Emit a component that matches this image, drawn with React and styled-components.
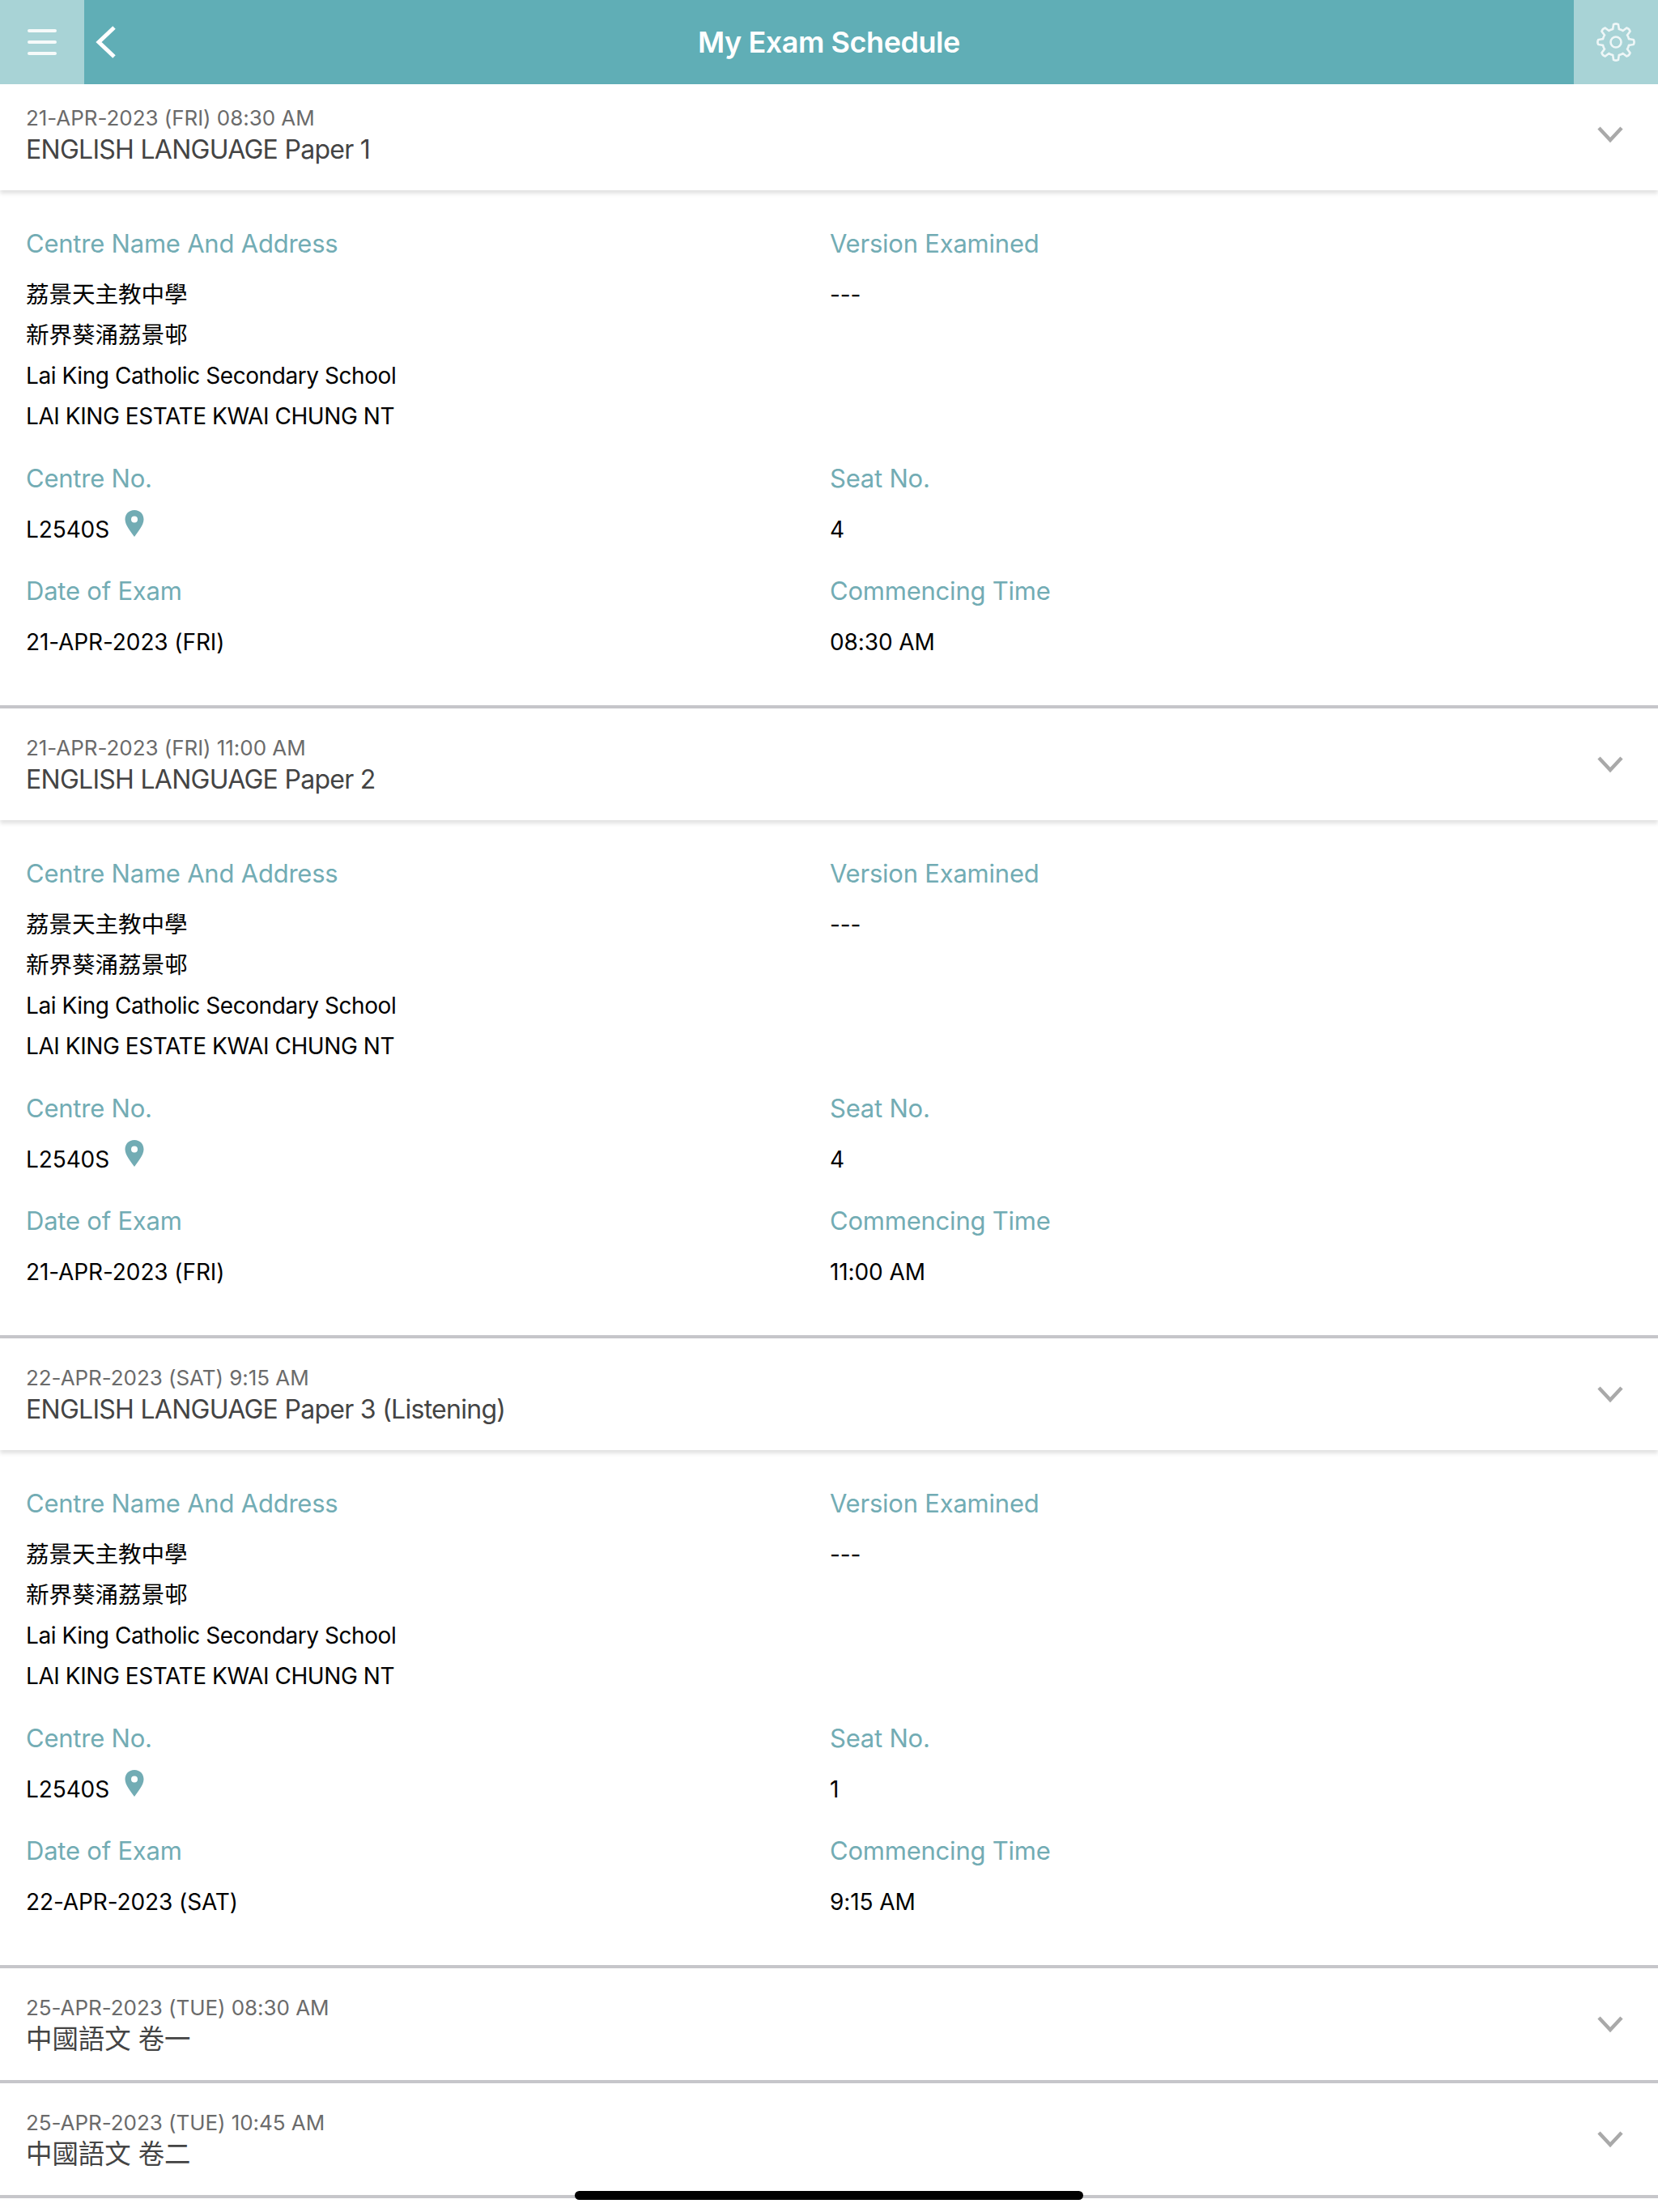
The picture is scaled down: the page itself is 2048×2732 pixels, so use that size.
import styled, { createGlobalStyle } from 'styled-components';

const exams = [
  {
    when: '21-APR-2023 (FRI) 08:30 AM',
    title: 'ENGLISH LANGUAGE Paper 1',
    seat: '4',
    date: '21-APR-2023 (FRI)',
    time: '08:30 AM',
  },
  {
    when: '21-APR-2023 (FRI) 11:00 AM',
    title: 'ENGLISH LANGUAGE Paper 2',
    seat: '4',
    date: '21-APR-2023 (FRI)',
    time: '11:00 AM',
  },
  {
    when: '22-APR-2023 (SAT) 9:15 AM',
    title: 'ENGLISH LANGUAGE Paper 3 (Listening)',
    seat: '1',
    date: '22-APR-2023 (SAT)',
    time: '9:15 AM',
  },
  { when: '25-APR-2023 (TUE) 08:30 AM', title: '中國語文 卷一', cjk: true },
  { when: '25-APR-2023 (TUE) 10:45 AM', title: '中國語文 卷二', cjk: true },
];

const address = [
  { text: '荔景天主教中學', cjk: true },
  { text: '新界葵涌荔景邨', cjk: true },
  { text: 'Lai King Catholic Secondary School' },
  { text: 'LAI KING ESTATE KWAI CHUNG NT' },
];

// outline of the 8 tooth cog in the settings button
const gearPath = () => {
  const teeth = 8;
  const point = (r, a) => `${(25 + r * Math.cos(a)).toFixed(2)} ${(25 + r * Math.sin(a)).toFixed(2)}`;
  let d = '';
  for (let i = 0; i < teeth; i++) {
    const step = (Math.PI * 2) / teeth;
    const a = i * step - Math.PI / 2;
    d += `${i === 0 ? 'M' : 'L'}${point(16.5, a - step * 0.3)} `;
    d += `L${point(22, a - step * 0.17)} `;
    d += `A6 6 0 0 1 ${point(22, a + step * 0.17)} `;
    d += `L${point(16.5, a + step * 0.3)} `;
    d += `A16.5 16.5 0 0 1 ${point(16.5, a + step * 0.7)} `;
  }
  return `${d}Z`;
};

const Chevron = () => (
  <ChevronIcon width="34" height="22" viewBox="0 0 34 22">
    <path d="M3 3 L17 18 L31 3" fill="none" stroke="#a9a9a9" strokeWidth="4.5" />
  </ChevronIcon>
);

const Pin = () => (
  <PinIcon width="24" height="33" viewBox="0 0 24 33">
    <path
      fillRule="evenodd"
      fill="#72acb4"
      d="M12 0 C5 0 0.5 5 0.5 11.5 C0.5 19 8 27 12 33 C16 27 23.5 19 23.5 11.5 C23.5 5 19 0 12 0 Z M12 7.5 A4 4 0 1 0 12 15.5 A4 4 0 1 0 12 7.5 Z"
    />
  </PinIcon>
);

const Details = ({ exam }) => (
  <DetailGrid>
    <Field>
      <Label>Centre Name And Address</Label>
      <AddressLines>
        {address.map((line) => (
          <Value key={line.text} $cjk={line.cjk} $tight={!line.cjk}>
            {line.text}
          </Value>
        ))}
      </AddressLines>
    </Field>
    <Field>
      <Label>Version Examined</Label>
      <AddressLines>
        <Value>---</Value>
      </AddressLines>
    </Field>
    <Field>
      <Label>Centre No.</Label>
      <ValueRow>
        <Value>L2540S</Value>
        <Pin />
      </ValueRow>
    </Field>
    <Field>
      <Label>Seat No.</Label>
      <ValueRow>
        <Value>{exam.seat}</Value>
      </ValueRow>
    </Field>
    <Field>
      <Label>Date of Exam</Label>
      <ValueRow>
        <Value>{exam.date}</Value>
      </ValueRow>
    </Field>
    <Field>
      <Label>Commencing Time</Label>
      <ValueRow>
        <Value>{exam.time}</Value>
      </ValueRow>
    </Field>
  </DetailGrid>
);

const App = () => {
  return (
    <>
      <GlobalStyle />
      <Page>
        <TopBar>
          <SideButton>
            <MenuIcon width="36" height="34" viewBox="0 0 36 34">
              <path d="M2 3 H34 M2 17 H34 M2 31 H34" stroke="#fff" strokeWidth="4" strokeLinecap="round" opacity="0.9" />
            </MenuIcon>
          </SideButton>
          <BackIcon width="26" height="40" viewBox="0 0 26 40">
            <path d="M23 2 L4 20 L23 38" fill="none" stroke="#fff" strokeWidth="5" />
          </BackIcon>
          <Title>My Exam Schedule</Title>
          <SideButton>
            <GearIcon width="50" height="50" viewBox="0 0 50 50">
              <path d={gearPath()} fill="none" stroke="#fff" strokeWidth="2.6" opacity="0.8" />
              <circle cx="25" cy="25" r="6.5" fill="none" stroke="#fff" strokeWidth="2.6" opacity="0.8" />
            </GearIcon>
          </SideButton>
        </TopBar>
        {exams.map((exam, i) => (
          <Exam key={exam.title}>
            <ExamHeader $first={i === 0} $open={!!exam.date}>
              <div>
                <When>{exam.when}</When>
                <ExamTitle $cjk={exam.cjk}>{exam.title}</ExamTitle>
              </div>
              <Chevron />
            </ExamHeader>
            {exam.date && <Details exam={exam} />}
          </Exam>
        ))}
        <HomeIndicator />
      </Page>
    </>
  );
};

export default App;

const GlobalStyle = createGlobalStyle`
  body {
    margin: 0;
    background: #fff;
    font-family: Inter, "Noto Sans CJK TC", sans-serif;
  }
`;

const Page = styled.div`
  position: relative;
  height: 2732px;
  overflow: hidden;
  background: #fff;
`;

const TopBar = styled.header`
  display: flex;
  align-items: center;
  height: 104px;
  background: #60aeb6;
`;

const SideButton = styled.div`
  display: flex;
  align-items: center;
  justify-content: center;
  width: 104px;
  height: 104px;
  flex: none;
  background: #a8d3d6;
`;

const MenuIcon = styled.svg``;

const GearIcon = styled.svg``;

const BackIcon = styled.svg`
  margin-left: 14px;
  flex: none;
`;

const Title = styled.h1`
  flex: 1;
  margin: 0 0 0 -40px;
  text-align: center;
  color: #fff;
  font-size: 36px;
  font-weight: 600;
  letter-spacing: -0.45px;
`;

const Exam = styled.section`
  border-bottom: 4px solid #c6c6ca;
`;

const ExamHeader = styled.div`
  display: flex;
  align-items: center;
  justify-content: space-between;
  box-sizing: border-box;
  height: ${(p) => (p.$first ? 131 : 138)}px;
  padding: 2px 42px ${(p) => (p.$first ? '7px' : '0')} 32px;
  box-shadow: ${(p) => (p.$open ? '0 4px 5px rgba(0, 0, 0, 0.12)' : 'none')};
`;

const ChevronIcon = styled.svg`
  margin-bottom: 2px;
`;

const When = styled.div`
  color: #6b6b6b;
  font-size: 26px;
  line-height: 34px;
  letter-spacing: -0.05px;
`;

const ExamTitle = styled.div`
  margin-top: 2px;
  color: #444;
  font-size: ${(p) => (p.$cjk ? 32.4 : 32)}px;
  line-height: 40px;
  letter-spacing: ${(p) => (p.$cjk ? 0 : -0.72)}px;
`;

const DetailGrid = styled.div`
  display: grid;
  grid-template-columns: 993px 1fr;
  padding: 44px 0 53px 32px;
  row-gap: 29.5px;
`;

const Field = styled.div`
  min-width: 0;
`;

const Label = styled.div`
  color: #72acb4;
  font-size: 31px;
  line-height: 44px;
  letter-spacing: -0.22px;
`;

const AddressLines = styled.div`
  display: flex;
  flex-direction: column;
  margin-top: 16px;
`;

const ValueRow = styled.div`
  display: flex;
  align-items: center;
  gap: 21px;
  height: 50px;
  margin-top: 16px;
`;

const Value = styled.div`
  color: #000;
  font-size: ${(p) => (p.$cjk ? 28.6 : 28)}px;
  line-height: 50px;
  letter-spacing: ${(p) => (p.$tight ? -0.43 : -0.1)}px;
`;

const PinIcon = styled.svg`
  margin-bottom: 15px;
  margin-left: -2px;
`;

const HomeIndicator = styled.div`
  position: absolute;
  left: 710px;
  top: 2706px;
  width: 628px;
  height: 11px;
  border-radius: 6px;
  background: #000;
`;
